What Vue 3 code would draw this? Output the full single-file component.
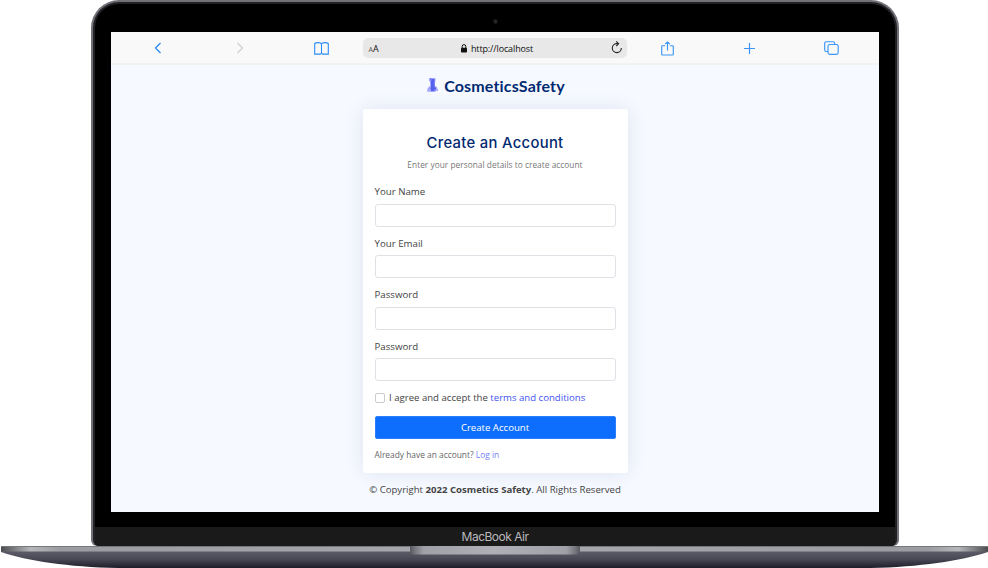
<script setup>
import { ref } from 'vue'

const fields = ref([
  { id: 'name', label: 'Your Name', type: 'text' },
  { id: 'email', label: 'Your Email', type: 'email' },
  { id: 'password', label: 'Password', type: 'password' },
  { id: 'confirm', label: 'Password', type: 'password' },
])
</script>

<template>
  <div class="stage">
    <div class="lid">
      <div class="bezel">
        <div class="camera-row"><span class="camera"></span></div>
        <div class="screen">
          <header class="toolbar">
            <div class="slot">
              <svg width="8" height="12" viewBox="0 0 8 12"><path d="M6.500 1 1.500 6l5 5" fill="none" stroke="#2a8cf5" stroke-width="1.300" /></svg>
            </div>
            <div class="slot forward">
              <svg width="8" height="12" viewBox="0 0 8 12"><path d="M1.500 1l5 5-5 5" fill="none" stroke="#cfcfcf" stroke-width="1.200" /></svg>
            </div>
            <div class="slot book">
              <svg width="15" height="13" viewBox="0 0 15 13"><path d="M7.500 1.800V11.500M7.500 1.900C6.500.3 2.200.3.700 1.500V12.100H6.300L7.500 11.300 8.700 12.100H14.300V1.500C12.800.3 8.500.3 7.500 1.900Z" fill="none" stroke="#2a8cf5" stroke-width="1.100" /></svg>
            </div>
            <div class="address">
              <span class="aa"><small>A</small>A</span>
              <span class="url">
                <svg width="6" height="9" viewBox="0 0 6 9"><path d="M1.200 4V2.400a1.800 1.800 0 0 1 3.600 0V4" fill="none" stroke="#111" stroke-width="1" /><rect y="3.700" width="6" height="4.900" rx=".8" fill="#111" /></svg>
                http://localhost
              </span>
              <svg class="reload" width="12" height="13" viewBox="0 0 12 13"><path d="M7 2.600H5.500A4.500 4.500 0 1 0 10.300 7" fill="none" stroke="#222" stroke-width="1.100" /><path d="M5.200.4 7.600 2.700 5.200 5.100" fill="none" stroke="#222" stroke-width="1.100" /></svg>
            </div>
            <div class="slot share">
              <svg width="13" height="15" viewBox="0 0 13 15"><path d="M4.200 4.700H1.500a.8.8 0 0 0-.8.8v7.700a.8.8 0 0 0 .8.8h10a.8.8 0 0 0 .8-.8V5.500a.8.8 0 0 0-.8-.8H8.800M6.500 9.500V1.200M4.200 3.200 6.500 1 8.800 3.200" fill="none" stroke="#3a95f7" stroke-width="1.150" stroke-linejoin="round" /></svg>
            </div>
            <div class="slot">
              <svg width="11" height="11" viewBox="0 0 11 11"><path d="M5.500 0v11M0 5.500h11" stroke="#3a95f7" stroke-width="1.200" /></svg>
            </div>
            <div class="slot tabs">
              <svg width="15" height="14" viewBox="0 0 15 14"><rect x="4" y="3.500" width="10.200" height="9.900" rx="1.800" fill="none" stroke="#3a95f7" stroke-width="1.150" /><path d="M4 10.500H2.200A1.500 1.500 0 0 1 .7 9V2.200A1.500 1.500 0 0 1 2.200.7h7A1.500 1.500 0 0 1 10.700 2.200v1.300" fill="none" stroke="#3a95f7" stroke-width="1.150" /></svg>
            </div>
          </header>

          <main class="page">
            <div class="brand">
              <svg width="11" height="15" viewBox="0 0 11 15">
                <path d="M2.500 0h6v3.500H8V8l2 1v1.500l1 .5v2H8.500v1h-5L3 13.500.3 14v-3L2 8.500l1.200-.5V3.500h-.7z" fill="#a3a8fa" />
                <path d="M3.500 1h4v7.500L9 10v1.500H7.500V13H4v-2l-1-.5L4 9z" fill="#5560ee" />
                <path d="M2.500 0h2v3h-2z" fill="#8289f6" />
              </svg>
              <span class="brand-name">CosmeticsSafety</span>
            </div>

            <form class="card" @submit.prevent>
              <h1>Create an Account</h1>
              <p class="intro">Enter your personal details to create account</p>
              <div v-for="f in fields" :key="f.id" class="field">
                <label :for="f.id">{{ f.label }}</label>
                <input :id="f.id" :type="f.type" />
              </div>
              <label class="agree">
                <input type="checkbox" />
                <span>I agree and accept the <a>terms and conditions</a></span>
              </label>
              <button type="submit">Create Account</button>
              <p class="login">Already have an account? <a>Log in</a></p>
            </form>

            <footer>© Copyright <b>2022 Cosmetics Safety</b>. All Rights Reserved</footer>
          </main>
        </div>
        <div class="chin">MacBook Air</div>
      </div>
    </div>

    <svg class="base" width="988" height="22" viewBox="0 0 988 22">
      <defs>
        <linearGradient id="body" x1="0" y1="0" x2="0" y2="1">
          <stop offset=".25" stop-color="#5b5c67" />
          <stop offset=".6" stop-color="#484955" />
          <stop offset="1" stop-color="#1d1c28" />
        </linearGradient>
        <linearGradient id="deck" x1="0" x2="1">
          <stop offset="0" stop-color="#4b4c51" />
          <stop offset=".012" stop-color="#77787c" />
          <stop offset=".03" stop-color="#b5b6b9" />
          <stop offset=".06" stop-color="#9b9ca1" />
          <stop offset=".5" stop-color="#a8a9ae" />
          <stop offset=".94" stop-color="#9b9ca1" />
          <stop offset=".97" stop-color="#b5b6b9" />
          <stop offset=".988" stop-color="#77787c" />
          <stop offset="1" stop-color="#4b4c51" />
        </linearGradient>
        <linearGradient id="notch" x1="0" x2="1">
          <stop offset="0" stop-color="#57585e" />
          <stop offset=".03" stop-color="#77787e" />
          <stop offset=".08" stop-color="#a0a1a6" />
          <stop offset=".5" stop-color="#afb0b5" />
          <stop offset=".92" stop-color="#a0a1a6" />
          <stop offset=".97" stop-color="#77787e" />
          <stop offset="1" stop-color="#57585e" />
        </linearGradient>
      </defs>
      <path d="M1 0H988V6C960 15 920 21 870 22H118C68 21 28 15 1 6Z" fill="url(#body)" />
      <path d="M1 0H988V5.500H1Z" fill="url(#deck)" />
      <path d="M1 .5H988" stroke="#77787d" />
      <path d="M410 0h170v4q0 4.500-5 4.500H415q-5 0-5-4.500Z" fill="url(#notch)" />
    </svg>
  </div>
</template>

<style>
body {
  margin: 0;
  background: #fff;
}
</style>

<style scoped>
.stage {
  width: 988px;
  height: 568px;
  overflow: hidden;
  display: flex;
  flex-direction: column;
  align-items: center;
  font-family: "Open Sans", sans-serif;
  color: #444;
}
.lid {
  box-sizing: border-box;
  width: 808px;
  height: 546px;
  margin-left: 1px;
  padding: 2px 2px 0;
  border-radius: 28px 28px 6px 6px;
  background: #717278;
}
.bezel {
  box-sizing: border-box;
  height: 544px;
  padding: 0 16px;
  border: 2px solid #222226;
  border-bottom: 0;
  border-radius: 26px 26px 6px 6px;
  background: #000;
  overflow: hidden;
}
.camera-row {
  height: 28px;
  display: flex;
  justify-content: center;
  align-items: center;
}
.camera {
  width: 3px;
  height: 3px;
  margin: 6px 0 0 1px;
  border: 1px solid #161616;
  border-radius: 50%;
  background: #292929;
}
.screen {
  width: 768px;
  height: 480px;
  background: #f6f9ff;
}
.toolbar {
  box-sizing: border-box;
  height: 33px;
  display: grid;
  grid-template-columns: 94px 69px 89px 264px 82px 82px 88px;
  background: #f9f9f9;
  border-bottom: 2px solid #f2f2f3;
}
.slot {
  display: flex;
  align-items: center;
  justify-content: center;
  padding-top: 1px;
}
.forward {
  justify-content: flex-end;
  padding-right: 30px;
}
.book {
  justify-content: flex-end;
  padding-right: 34px;
}
.tabs {
  justify-content: flex-start;
  padding-left: 33px;
}
.address {
  align-self: center;
  box-sizing: border-box;
  height: 20px;
  display: grid;
  grid-template-columns: 40px 1fr 40px;
  align-items: center;
  padding: 0 4px 0 6px;
  border-radius: 5px;
  background: #e8e8e8;
  font-size: 9px;
  color: #111;
}
.aa {
  padding-top: 1px;
}
.aa small {
  font-size: 7px;
  color: #555;
}
.url {
  display: flex;
  align-items: center;
  justify-content: center;
  gap: 4px;
  padding: 1px 0 0 3px;
  white-space: nowrap;
  letter-spacing: -0.12px;
}
.reload {
  justify-self: end;
}
.page {
  display: flex;
  flex-direction: column;
  align-items: center;
  padding-left: 1px;
}
.brand {
  box-sizing: border-box;
  height: 44px;
  padding: 0 0 3px 2px;
  display: flex;
  align-items: center;
  gap: 6px;
  color: #012970;
}
.brand-name {
  font-family: Lato, sans-serif;
  font-weight: 700;
  font-size: 16px;
  letter-spacing: 0.16px;
}
.card {
  box-sizing: border-box;
  width: 265px;
  height: 364px;
  padding: 22px 12px 0;
  border-radius: 3px;
  background: #fff;
  box-shadow: 0 0 19px rgba(1, 41, 112, 0.1);
}
h1 {
  margin: 0;
  padding-top: 1px;
  text-align: center;
  font-family: Inter, sans-serif;
  font-weight: 500;
  font-size: 14.8px;
  letter-spacing: 0.32px;
  line-height: 23px;
  color: #012970;
}
.intro {
  margin: 2.5px 0 12.3px;
  text-align: center;
  font-size: 8.3px;
  letter-spacing: 0.04px;
  line-height: 14px;
  color: #777;
}
.field {
  height: 51.5px;
}
.field label {
  display: block;
  padding-top: 0.4px;
  margin-bottom: 4.4px;
  font-size: 9.7px;
  line-height: 15px;
}
.field input {
  display: block;
  box-sizing: border-box;
  width: 241px;
  height: 23px;
  padding: 0 8px;
  border: 1px solid #dee1e5;
  border-radius: 3px;
  background: #fff;
}
.agree {
  display: flex;
  align-items: center;
  gap: 4.5px;
  height: 16px;
  font-size: 9.6px;
  white-space: nowrap;
}
.agree input {
  appearance: none;
  box-sizing: border-box;
  width: 10px;
  height: 10px;
  margin: 0;
  border: 1px solid #ccc;
  border-radius: 2px;
  background: #fff;
}
a {
  color: #4154f1;
}
button {
  display: block;
  box-sizing: border-box;
  width: 241px;
  height: 23px;
  margin-top: 10px;
  padding: 0;
  border: 1px solid #2b7efd;
  border-radius: 2px;
  background: #0d6efd;
  color: #fff;
  font: 9.6px "Open Sans", sans-serif;
}
.login {
  margin: 9px 0 0;
  font-size: 8.4px;
  line-height: 14px;
  color: #666;
}
.login a {
  color: #7480f5;
}
footer {
  margin-top: 9px;
  font-size: 9.6px;
  line-height: 15px;
  white-space: nowrap;
}
.chin {
  height: 19px;
  margin: 15px -16px 0;
  padding-left: 1px;
  text-align: center;
  background: #1a1a1a;
  color: #b9b9bd;
  font-family: Inter, sans-serif;
  font-size: 12px;
  letter-spacing: -0.5px;
  line-height: 20px;
}
.base {
  display: block;
  flex: none;
}
</style>
